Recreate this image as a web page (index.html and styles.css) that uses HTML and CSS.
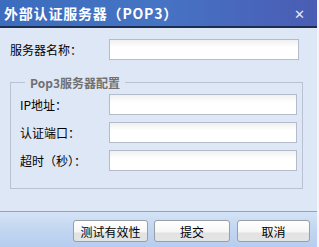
FILE: index.html
```html
<!DOCTYPE html>
<html lang="zh-CN">
<head>
  <meta charset="UTF-8">
  <title>外部认证服务器（POP3）</title>
  <link rel="stylesheet" href="styles.css">
</head>
<body>
  <div class="dialog">
    <div class="titlebar">
      <span class="title">外部认证服务器（POP3）</span>
      <span class="close">&#x2715;</span>
    </div>

    <div class="content">
      <div class="row top-row">
        <label>服务器名称：</label>
        <input type="text" class="wide">
      </div>

      <fieldset class="group">
        <legend>Pop3服务器配置</legend>
        <div class="row">
          <label>IP地址：</label>
          <input type="text">
        </div>
        <div class="row">
          <label>认证端口：</label>
          <input type="text">
        </div>
        <div class="row">
          <label>超时（秒）：</label>
          <input type="text">
        </div>
      </fieldset>
    </div>

    <div class="footer">
      <button class="btn btn-test">测试有效性</button>
      <button class="btn btn-submit">提交</button>
      <button class="btn btn-cancel">取消</button>
    </div>
  </div>
</body>
</html>
```

FILE: styles.css
```css
body {
  margin: 0;
  padding: 0;
  font-family: "Noto Sans CJK SC", "DejaVu Sans", sans-serif;
  font-size: 12px;
  color: #000;
  background-color: #f4f6fa;
}

.dialog {
  width: 317px;
  height: 247px;
  background-color: #dee7f6;
  display: flex;
  flex-direction: column;
}

.titlebar {
  height: 26px;
  display: flex;
  align-items: center;
  justify-content: space-between;
  padding: 0 12px 0 4px;
  background: linear-gradient(to right, #3b6cbd 0%, #4674c4 50%, #4a5cb4 100%);
  border-bottom: 2px solid #1c2d52;
}

.title {
  color: #fff;
  font-weight: bold;
  font-size: 14px;
  letter-spacing: 0.8px;
}

.close {
  color: #e4e8f6;
  font-size: 13px;
  font-weight: bold;
}

.content {
  flex: 1;
  padding: 11px 0 0 10px;
}

.row {
  display: flex;
  align-items: center;
  height: 21px;
}

.row label {
  width: 99px;
  line-height: 21px;
}

.top-row {
  height: 21px;
  margin-bottom: 14px;
}

input {
  box-sizing: border-box;
  height: 21px;
  width: 188px;
  border: 1px solid #b4bccc;
  background: linear-gradient(to bottom, #f0f0f0 0%, #ffffff 40%, #ffffff 100%);
  margin: 0;
  padding: 0 3px;
}

input.wide {
  width: 190px;
}

.group {
  width: 293px;
  height: 115px;
  box-sizing: border-box;
  margin: 0;
  padding: 3px 0 0 9px;
  border: 1px solid #b8c2d2;
  display: flex;
  flex-direction: column;
  gap: 7px;
}

.group legend {
  margin-left: 5px;
  padding: 0 5px;
  color: #707070;
  font-weight: bold;
  font-size: 12px;
}

.group .row label {
  width: 89px;
}

.footer {
  height: 27px;
  border-top: 1px solid #8ea4c4;
  background: linear-gradient(to bottom, #d4e3f6 0%, #c2d6f0 50%, #b6cdef 100%);
  display: flex;
  align-items: flex-start;
  padding: 8px 0 0 73px;
  gap: 6px;
}

.btn {
  height: 22px;
  border: 1px solid #9a9ea6;
  border-radius: 3px;
  background: linear-gradient(to bottom, #ffffff 0%, #f6f6f6 55%, #e2e2e2 60%, #e4e4e4 100%);
  font-family: "Noto Sans CJK SC", "DejaVu Sans", sans-serif;
  font-size: 12px;
  color: #000;
  padding: 0;
  cursor: pointer;
}

.btn-test {
  width: 75px;
}

.btn-submit {
  width: 76px;
}

.btn-cancel {
  width: 73px;
  margin-left: 1px;
}
```
